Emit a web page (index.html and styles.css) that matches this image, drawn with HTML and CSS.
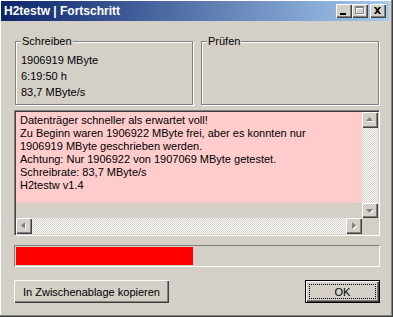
FILE: index.html
```html
<!DOCTYPE html>
<html lang="de">
<head>
  <meta charset="UTF-8" />
  <title>H2testw | Fortschritt</title>
  <link rel="stylesheet" href="styles.css">
</head>
<body>
  <div class="window">
    <div class="titlebar">
      <span class="title">H2testw | Fortschritt</span>
      <div class="caption-buttons">
        <div class="cap-btn">
          <svg width="16" height="14" viewBox="0 0 16 14"><rect x="4" y="9" width="6" height="2" fill="#000"/></svg>
        </div>
        <div class="cap-btn">
          <!-- maximieren, deaktiviert -->
          <svg width="16" height="14" viewBox="0 0 16 14">
            <path d="M4.5 3.5h8v7h-8z M4.5 4.5h8" fill="none" stroke="#fff"/>
            <path d="M3.5 2.5h8v7h-8z M3.5 3.5h8" fill="none" stroke="#808080"/>
          </svg>
        </div>
        <div class="cap-btn cap-close">
          <svg width="16" height="14" viewBox="0 0 16 14">
            <path d="M4 3h2l1.5 2 1.5-2h2l-2.5 3.5 2.5 3.5h-2l-1.5-2-1.5 2h-2l2.5-3.5z" fill="#000"/>
          </svg>
        </div>
      </div>
    </div>

    <div class="client">
      <div class="groups">
        <fieldset class="group">
          <legend>Schreiben</legend>
          <div class="group-line">1906919 MByte</div>
          <div class="group-line">6:19:50 h</div>
          <div class="group-line">83,7 MByte/s</div>
        </fieldset>
        <fieldset class="group">
          <legend>Prüfen</legend>
        </fieldset>
      </div>

      <div class="memo">
        <div class="memo-text">
          <div>Datenträger schneller als erwartet voll!</div>
          <div>Zu Beginn waren 1906922 MByte frei, aber es konnten nur</div>
          <div>1906919 MByte geschrieben werden.</div>
          <div>Achtung: Nur 1906922 von 1907069 MByte getestet.</div>
          <div>Schreibrate: 83,7 MByte/s</div>
          <div>H2testw v1.4</div>
        </div>
        <div class="vscroll">
          <div class="sb-btn">
            <svg width="16" height="16" viewBox="0 0 16 16">
              <path d="M5 10h7l-3.5-4z" fill="#fff"/>
              <path d="M4 9h7l-3.5-4z" fill="#808080"/>
            </svg>
          </div>
          <div class="sb-track"></div>
          <div class="sb-btn">
            <svg width="16" height="16" viewBox="0 0 16 16">
              <path d="M5 7h7l-3.5 4z" fill="#fff"/>
              <path d="M4 6h7l-3.5 4z" fill="#808080"/>
            </svg>
          </div>
        </div>
        <div class="memo-gap"></div>
        <div class="hscroll">
          <div class="sb-btn">
            <svg width="16" height="16" viewBox="0 0 16 16">
              <path d="M10 5v7l-4-3.5z" fill="#fff"/>
              <path d="M9 4v7l-4-3.5z" fill="#808080"/>
            </svg>
          </div>
          <div class="sb-track"></div>
          <div class="sb-btn">
            <svg width="16" height="16" viewBox="0 0 16 16">
              <path d="M7 5v7l4-3.5z" fill="#fff"/>
              <path d="M6 4v7l4-3.5z" fill="#808080"/>
            </svg>
          </div>
        </div>
        <div class="corner"></div>
      </div>

      <div class="progress">
        <div class="progress-fill" style="width: 177px;"></div>
      </div>

      <div class="buttons">
        <div class="button btn-copy">In Zwischenablage kopieren</div>
        <div class="button btn-ok">OK</div>
      </div>
    </div>
  </div>
</body>
</html>
```

FILE: styles.css
```css
html, body {
  margin: 0; padding: 0;
  background-color: #d4d0c8;
  font-family: "Liberation Sans", Arial, sans-serif;
  font-size: 11px;
  color: #000;
}
.window {
  width: 393px;
  height: 317px;
  box-sizing: border-box;
  background-color: #d4d0c8;
  box-shadow: inset -1px -1px #404040, inset -2px -2px #808080, inset 1px 1px #fff;
  overflow: hidden;
}

/* Titelleiste */
.titlebar {
  display: flex;
  align-items: center;
  height: 20px;
  margin: 1px 4px 0 1px;
  padding: 0 3px 0 3px;
  background: linear-gradient(to right, #0a246a, #a6caf0);
}
.title {
  color: #fff;
  font-weight: bold;
  font-size: 12px;
  white-space: nowrap;
}
.caption-buttons {
  display: flex;
  margin-left: auto;
}
.cap-btn {
  width: 16px;
  height: 14px;
  background-color: #d4d0c8;
  box-shadow: inset 1px 1px #fff, inset -1px -1px #404040, inset -2px -2px #808080;
}
.cap-btn svg { display: block; }
.cap-close { margin-left: 2px; }

/* Inhalt */
.client {
  padding: 14px 13px 0 14px;
}
.groups {
  display: flex;
  gap: 8px;
  margin-left: 1px;
}
.group {
  width: 178px;
  box-sizing: border-box;
  margin: 0;
  padding: 5px 5px 4px 5px;
  min-inline-size: 0;
  border: 1px solid #808080;
  box-shadow: inset 1px 1px #fff, 1px 1px #fff;
}
.group legend {
  padding: 0 1px;
  line-height: 12px;
  background-color: #d4d0c8;
}
.group-line {
  line-height: 16px;
  white-space: nowrap;
}

.memo {
  display: grid;
  grid-template-columns: 1fr 16px;
  grid-template-rows: 91px 15px 16px;
  margin-top: 5px;
  padding: 1px;
  border: 1px solid;
  border-color: #808080 #fff #fff #808080;
  box-shadow: inset 1px 1px #404040, inset -1px -1px #d4d0c8;
}
.memo-text {
  background-color: #ffcccc;
  padding: 2px 0 0 4px;
  line-height: 13px;
  white-space: nowrap;
  overflow: hidden;
}
.vscroll {
  grid-row: 1 / 3;
  grid-column: 2;
  display: flex;
  flex-direction: column;
}
.memo-gap { background-color: #d4d0c8; }
.hscroll {
  display: flex;
}
.corner { background-color: #d4d0c8; }
.sb-btn {
  width: 16px;
  height: 16px;
  flex: none;
  background-color: #d4d0c8;
  box-shadow: inset 1px 1px #fff, inset -1px -1px #404040, inset -2px -2px #808080;
}
.hscroll .sb-btn { height: 16px; }
.vscroll .sb-btn:last-child { height: 15px; }
.sb-btn svg { display: block; }
.sb-track {
  flex: 1;
  background: repeating-conic-gradient(#fff 0 25%, #d4d0c8 0 50%) 0 0 / 2px 2px;
}

.progress {
  height: 22px;
  box-sizing: border-box;
  margin-top: 9px;
  padding: 1px;
  border: 1px solid;
  border-color: #808080 #fff #fff #808080;
}
.progress-fill {
  height: 18px;
  background-color: #ff0000;
}

.buttons {
  display: flex;
  justify-content: space-between;
  margin-top: 13px;
}
.button {
  height: 23px;
  box-sizing: border-box;
  display: flex;
  align-items: center;
  justify-content: center;
  background-color: #d4d0c8;
  box-shadow: inset 1px 1px #fff, inset -1px -1px #404040, inset -2px -2px #808080;
}
.btn-copy { width: 155px; }
.btn-ok {
  position: relative;
  width: 75px;
  border: 1px solid #000;
}
.btn-ok::after {
  content: "";
  position: absolute;
  top: 3px; left: 3px; right: 3px; bottom: 3px;
  border: 1px dotted #000;
}
```
